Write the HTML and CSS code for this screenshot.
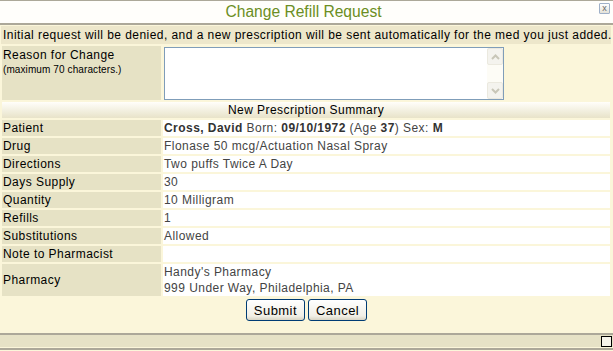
FILE: index.html
```html
<!DOCTYPE html>
<html lang="en">
<head>
  <meta charset="UTF-8" />
  <title>Change Refill Request</title>
  <link rel="stylesheet" href="styles.css">
</head>
<body>

  <div class="dialog">
    <div class="titlebar">
      <span class="title">Change Refill Request</span>
      <span class="close-btn">x</span>
    </div>

    <div class="notice">Initial request will be denied, and a new prescription will be sent automatically for the med you just added.</div>

    <table class="summary">
      <tr class="reason-row">
        <td class="label top">Reason for Change<br><span class="hint">(maximum 70 characters.)</span></td>
        <td class="reason-cell">
          <div class="textbox">
            <textarea maxlength="70"></textarea>
            <div class="scrollbar">
              <span class="arrow">
                <svg width="9" height="6" viewBox="0 0 9 6"><path d="M1 5 L4.5 1.5 L8 5" fill="none" stroke="#c8c6b8" stroke-width="2"/></svg>
              </span>
              <span class="arrow">
                <svg width="9" height="6" viewBox="0 0 9 6"><path d="M1 1 L4.5 4.5 L8 1" fill="none" stroke="#c8c6b8" stroke-width="2"/></svg>
              </span>
            </div>
          </div>
        </td>
      </tr>
      <tr>
        <th colspan="2">New Prescription Summary</th>
      </tr>
      <tr>
        <td class="label">Patient</td>
        <td class="value"><b>Cross, David</b> Born: <b>09/10/1972</b> (Age <b>37</b>) Sex: <b>M</b></td>
      </tr>
      <tr>
        <td class="label">Drug</td>
        <td class="value">Flonase 50 mcg/Actuation Nasal Spray</td>
      </tr>
      <tr>
        <td class="label">Directions</td>
        <td class="value">Two puffs Twice A Day</td>
      </tr>
      <tr>
        <td class="label">Days Supply</td>
        <td class="value">30</td>
      </tr>
      <tr>
        <td class="label">Quantity</td>
        <td class="value">10 Milligram</td>
      </tr>
      <tr>
        <td class="label">Refills</td>
        <td class="value">1</td>
      </tr>
      <tr>
        <td class="label">Substitutions</td>
        <td class="value">Allowed</td>
      </tr>
      <tr>
        <td class="label">Note to Pharmacist</td>
        <td class="value"></td>
      </tr>
      <tr class="tall">
        <td class="label">Pharmacy</td>
        <td class="value">Handy's Pharmacy<br>999 Under Way, Philadelphia, PA</td>
      </tr>
    </table>

    <div class="actions">
      <button type="button">Submit</button>
      <button type="button">Cancel</button>
    </div>

    <div class="statusbar">
      <span class="grip"></span>
    </div>
  </div>

</body>
</html>
```

FILE: styles.css
```css
body {
  margin: 0;
  background: #fbf6da;
  font-family: "Liberation Sans", Arial, sans-serif;
  font-size: 12px;
  letter-spacing: 0.45px;
  color: #000;
}

.dialog {
  width: 613px;
  height: 351px;
  display: flex;
  flex-direction: column;
}

/* barra del titolo */
.titlebar {
  height: 22px;
  background: #fffefb;
  border-top: 1px solid #aca899;
  border-bottom: 2px solid #aca899;
  display: flex;
  align-items: center;
  justify-content: center;
  position: relative;
}

.title {
  font-size: 15.6px;
  letter-spacing: 0;
  color: #6b8e23;
  margin-left: -6px;
}

.close-btn {
  position: absolute;
  right: 3px;
  top: 2px;
  width: 9px;
  height: 9px;
  border: 1px solid #9fb0c8;
  border-radius: 1px;
  background: linear-gradient(#ffffff, #e4e2d8);
  font-size: 9px;
  letter-spacing: 0;
  line-height: 8px;
  text-align: center;
  color: #666;
}

.notice {
  margin: 1px 2px 0 1px;
  height: 18px;
  line-height: 18px;
  padding-left: 2px;
  background: #ede7cb;
  white-space: nowrap;
}

.summary {
  width: 612px;
  border-spacing: 2px;
}

.summary td,
.summary th {
  padding: 0 1px;
  height: 16px;
  line-height: 16px;
}

.label {
  width: 157px;
  background: #e6e2c5;
  white-space: nowrap;
}

.reason-row {
  height: 54px;
}

.label.top {
  vertical-align: top;
  padding-top: 2px;
  line-height: 14px;
}

.hint {
  font-size: 10px;
  letter-spacing: 0.1px;
}

.value {
  background: #fff;
  color: #444;
}

.value b {
  color: #333;
}

.summary th {
  font-weight: normal;
  background: linear-gradient(#fffefa, #e8e3c9);
}

.tall td {
  height: 32px;
}

.reason-cell {
  padding: 0;
  vertical-align: top;
}

.textbox {
  width: 338px;
  height: 51px;
  margin-top: 1px;
  border: 1px solid #7f9db9;
  background: #fff;
  display: flex;
}

.textbox textarea {
  flex: 1;
  border: none;
  resize: none;
  outline: none;
  overflow: hidden;
  padding: 2px;
  font-family: inherit;
  font-size: 12px;
}

.scrollbar {
  width: 16px;
  background: #fdfcf6;
  display: flex;
  flex-direction: column;
  justify-content: space-between;
}

.arrow {
  height: 15px;
  border: 1px solid #ebe9df;
  border-radius: 2px;
  background: #f4f3ee;
  display: flex;
  align-items: center;
  justify-content: center;
}

.actions {
  display: flex;
  justify-content: center;
  gap: 3px;
  padding-top: 1px;
  height: 34px;
}

button {
  height: 22px;
  padding: 0 7px;
  font-family: inherit;
  font-size: 13px;
  letter-spacing: 0.45px;
  color: #000;
  background: linear-gradient(#ffffff, #f1efe6 80%, #d8d4c4);
  border: 1px solid #003c74;
  border-radius: 3px;
}

.statusbar {
  border-top: 2px solid #aca899;
  border-bottom: 2px solid #aca899;
  height: 12px;
  background: #e6e2c6;
  box-shadow: inset 0 -1px 0 #fbf6da;
  display: flex;
  justify-content: flex-end;
  padding: 1px 1px 0 0;
}

.grip {
  width: 9px;
  height: 9px;
  border: 1px solid #000;
  background: #f6f4ea;
}
```
